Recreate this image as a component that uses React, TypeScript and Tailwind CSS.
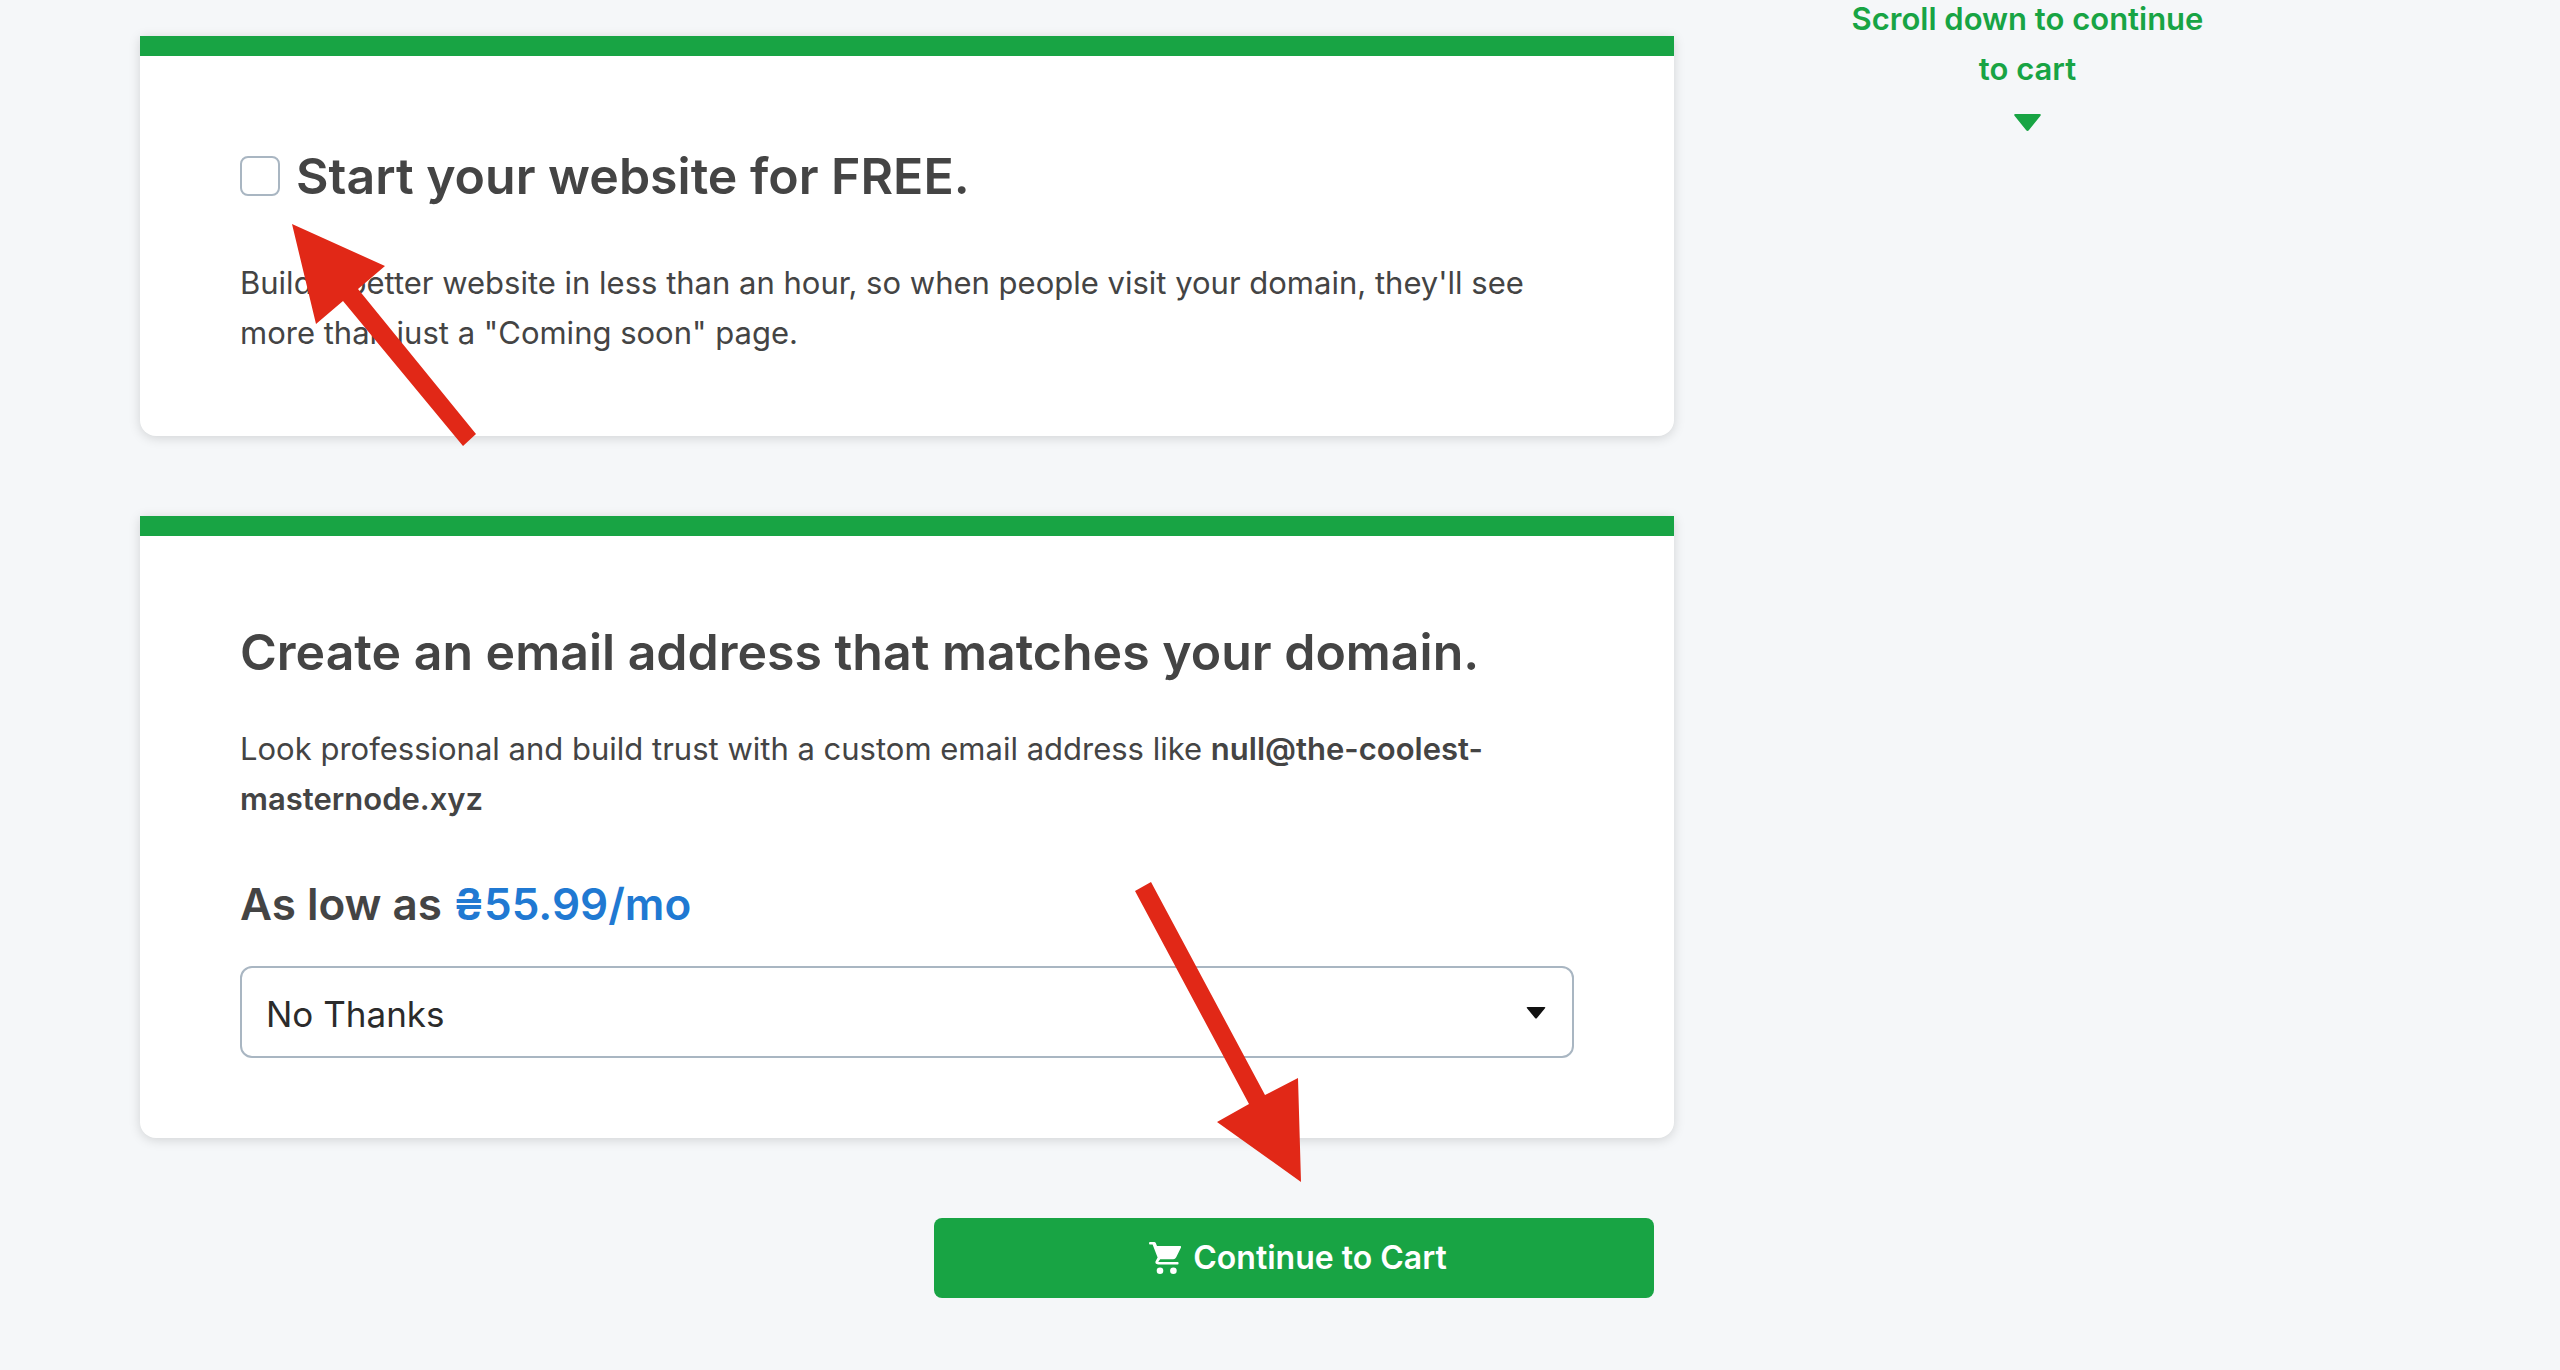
import type { ReactNode } from "react";

function Card({ className, children }: { className: string; children: ReactNode }) {
  return (
    <section className="rounded-b-[16px] bg-white shadow-[0_2px_12px_rgba(0,0,0,0.15)]">
      <div className="h-5 bg-[#18a444]" />
      <div className={className}>{children}</div>
    </section>
  );
}

function CartIcon() {
  return (
    <svg viewBox="0 0 32 32" className="size-8 shrink-0" fill="currentColor" aria-hidden="true">
      <path d="M1 0H5.2Q6.3 0 6.8 1L8 4H31Q32.600 4 32 5.400L27.200 15.200Q26.300 17.200 24.200 17.200H11.200L9.500 19.400Q9.200 20 10 20H28.600Q29.600 20 29.600 21.200Q29.600 22.400 28.600 22.400H9.500Q5.600 22.400 6.600 19.200L8.600 15.400L3.600 2.400H1Q0 2.400 0 1.200Q0 0 1 0Z" />
      <circle cx="11" cy="28.700" r="3.300" />
      <circle cx="24.400" cy="28.700" r="3.300" />
    </svg>
  );
}

export default function App() {
  return (
    <div className="flex min-h-screen bg-[#f5f7f9] pr-[99px] pl-[100px] font-['Inter',sans-serif] text-[31px] leading-[50px] text-[#444]">
      <main className="relative w-2/3 pt-9 pb-[72px] pl-10">
        <Card className="px-[100px] pt-[90px] pb-[78px]">
          <div className="flex items-center gap-4">
            <input
              id="website"
              type="checkbox"
              className="size-10 shrink-0 appearance-none rounded-[8px] border-2 border-[#a9b6c2] bg-white checked:bg-[#18a444]"
            />
            <label htmlFor="website" className="text-[50px] leading-[60px] font-semibold">
              Start your website for FREE.
            </label>
          </div>
          <p className="mt-[52px]">
            Build a better website in less than an hour, so when people visit your domain, they'll see more than just a
            "Coming soon" page.
          </p>
        </Card>

        <div className="mt-20">
          <Card className="px-[100px] pt-[86px] pb-20">
            <h2 className="text-[50px] leading-[60px] font-semibold">
              Create an email address that matches your domain.
            </h2>
            <p className="mt-[42px]">
              Look professional and build trust with a custom email address like{" "}
              <strong className="font-semibold">null@the-coolest-masternode.xyz</strong>
            </p>
            <p className="mt-[55px] text-[44px] font-semibold">
              As low as <span className="text-[#2079d2]">₴55.99/mo</span>
            </p>
            <div className="relative mt-[37px]">
              <select
                aria-label="Email plan"
                className="block h-[92px] w-full appearance-none rounded-[12px] border-2 border-[#a9b6c2] bg-white px-6 pt-1 text-[35px] text-[#2b2b2b]"
              >
                <option>No Thanks</option>
              </select>
              <svg
                viewBox="0 0 20 13"
                className="pointer-events-none absolute top-10 right-7 h-[13px] w-5"
                fill="#111"
                aria-hidden="true"
              >
                <path d="M1.500 1H18.500Q20 1 19 2.200L11 12Q10 13 9 12L1 2.200Q0 1 1.500 1Z" />
              </svg>
            </div>
          </Card>
        </div>

        <div className="mt-20 flex justify-end pr-5">
          <button
            type="button"
            className="flex h-20 w-[720px] max-w-full items-center justify-center gap-3 rounded-[8px] bg-[#18a444] pl-2 text-[32px] font-semibold text-white"
          >
            <CartIcon />
            Continue to Cart
          </button>
        </div>

        <svg
          viewBox="292 224 184 222"
          className="pointer-events-none absolute top-[224px] left-48 h-[222px] w-[184px]"
          fill="#e12817"
          aria-hidden="true"
        >
          <path d="M292 224L385 266L358 289L476 434L463 446L343 301L316 324Z" />
        </svg>
        <svg
          viewBox="1135 882 166 300"
          className="pointer-events-none absolute top-[882px] left-[1035px] h-[300px] w-[166px]"
          fill="#e12817"
          aria-hidden="true"
        >
          <path d="M1151 882L1265 1095L1298 1078L1301 1182L1217 1122L1249 1104L1135 891Z" />
        </svg>
      </main>

      <aside className="-mt-1.5 flex w-1/3 flex-col items-center pr-20 text-center font-semibold text-[#18a444]">
        <p className="max-w-[380px]">Scroll down to continue to cart</p>
        <svg viewBox="0 0 27 17" className="mt-5 h-[17px] w-[27px]" fill="currentColor" aria-hidden="true">
          <path d="M1.500 0H25.500Q27.500 0 26.500 1.800L15 16Q13.500 18 12 16L0.500 1.800Q-0.500 0 1.500 0Z" />
        </svg>
      </aside>
    </div>
  );
}
